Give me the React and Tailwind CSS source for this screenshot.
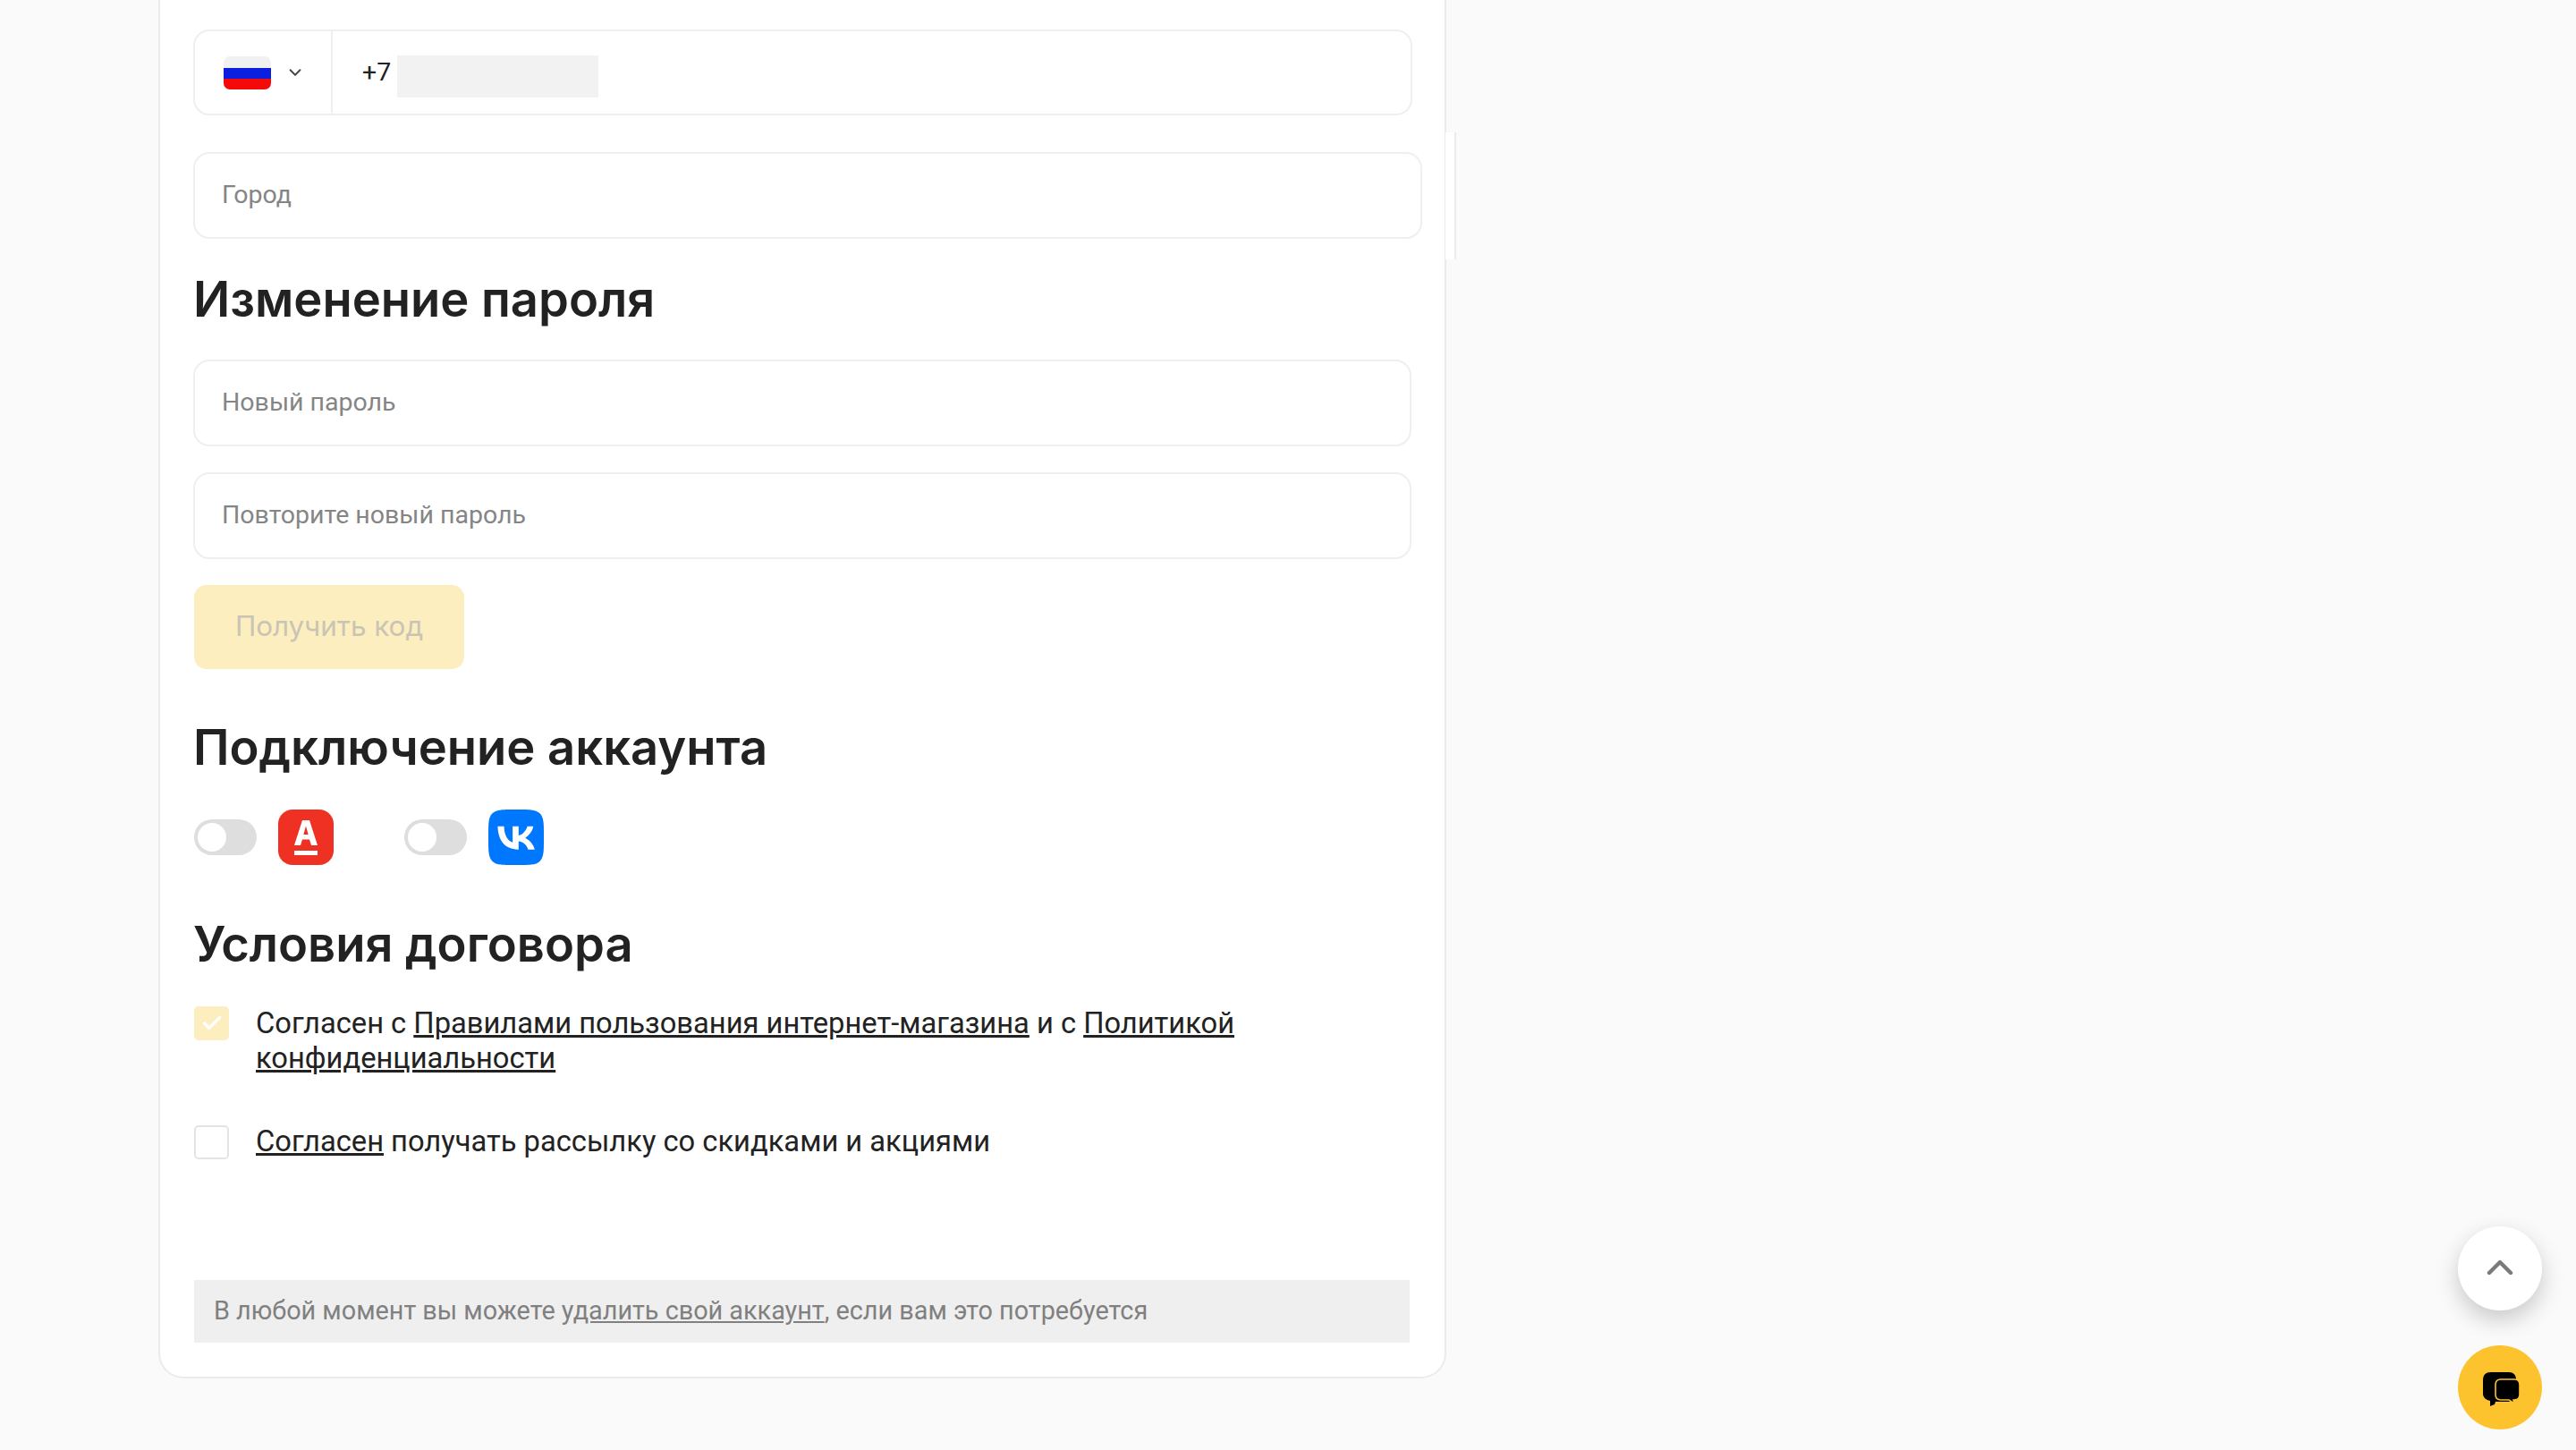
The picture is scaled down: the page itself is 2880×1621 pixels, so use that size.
import React from 'react';
import { ChevronDown, ChevronUp, Check } from 'lucide-react';
import { SiVk } from 'react-icons/si';

function Field({ label }) {
  return (
    <div className="flex items-center h-[97px] w-[1362px] px-[30px] rounded-[18px] border-2 border-[#efefef] bg-white font-[Roboto,sans-serif] text-[28.5px] text-[#858585]">
      {label}
    </div>
  );
}

function Heading({ children, className }) {
  return (
    <h2 className={`h-[64px] leading-[64px] font-[Inter,sans-serif] font-semibold text-[54.3px] text-[#222222] ${className}`}>
      {children}
    </h2>
  );
}

function Toggle() {
  return (
    <div className="flex items-center w-[70px] h-[40px] rounded-full bg-[#dedede] p-[4px]">
      <div className="w-[32px] h-[32px] rounded-full bg-white" />
    </div>
  );
}

function AlfaLogo() {
  return (
    <svg width="62" height="62" viewBox="0 0 62 62">
      <rect width="62" height="62" rx="16" fill="#ef3124" />
      <path fillRule="evenodd" fill="#fff" d="M27 12h8l9 28h-7l-2-6.5H27L25 40h-7zM31 18.5l-2.7 9.5h5.4z" />
      <rect x="18" y="46" width="26" height="5" fill="#fff" />
    </svg>
  );
}

function FlagRu() {
  return (
    <svg width="53" height="37" viewBox="0 0 53 37">
      <defs>
        <clipPath id="flag-round">
          <rect width="53" height="37" rx="7" />
        </clipPath>
      </defs>
      <g clipPath="url(#flag-round)">
        <rect width="53" height="13" fill="#f1f1f1" />
        <rect y="13" width="53" height="12" fill="#0a1fe0" />
        <rect y="25" width="53" height="12" fill="#f50a0a" />
      </g>
    </svg>
  );
}

function ChatIcon() {
  return (
    <svg width="94" height="94" viewBox="0 0 94 94" className="absolute inset-0">
      <path fill="#000" d="M37 30h20c5 0 8 3 8 8v17c0 5-3 8-8 8H42l-1 3-5 2 0-6c-5-1-8-4-8-8V39c0-6 3-9 9-9z" />
      <path fill="#000" stroke="#fdc32f" strokeWidth="1.6" d="M48 38h15c4 0 6 2 6 6v11c0 4-2 6-6 6h-1l1 4-6-4H48c-4 0-6-2-6-6V44c0-4 2-6 6-6z" />
    </svg>
  );
}

export default function App() {
  return (
    <div className="relative h-[1621px] w-full overflow-hidden bg-[#fafafa] text-[#222222]">
      <div className="relative ml-[177px] w-[1440px] rounded-b-[28px] border-x-2 border-b-2 border-[#ebebeb] bg-white pl-[37px] pt-[33px] pb-[38px]">
        {/* white bump of the city field wrapper */}
        <div className="absolute left-[1437px] top-[148px] h-[142px] w-[12px] border-r-2 border-[#ebebeb] bg-white" />

        <div className="flex h-[96px] w-[1363px] rounded-[18px] border-2 border-[#efefef] bg-white">
          <div className="flex w-[154px] items-center border-r-2 border-[#efefef] pl-[32px]">
            <FlagRu />
            <ChevronDown size={22} strokeWidth={2} className="ml-[16px] text-[#444444]" />
          </div>
          <div className="flex items-center pl-[33px] font-[Roboto,sans-serif] text-[28.5px] text-[#222222]">
            +7
            <div className="ml-[7px] mt-[8px] h-[47px] w-[225px] bg-[#f2f2f2]" />
          </div>
        </div>

        <div className="relative mt-[41px] flex h-[97px] w-[1374px] items-center rounded-[18px] border-2 border-[#efefef] bg-white px-[30px] font-[Roboto,sans-serif] text-[28.5px] text-[#858585]">
          Город
        </div>

        <Heading className="mt-[35px]">Изменение пароля</Heading>

        <div className="mt-[36px] flex flex-col gap-[29px]">
          <Field label="Новый пароль" />
          <Field label="Повторите новый пароль" />
        </div>

        <button className="ml-px mt-[29px] flex h-[94px] w-[302px] items-center justify-center rounded-[14px] bg-[#fdeebf] font-[Inter,sans-serif] text-[31.4px] text-[#c9c4b4]">
          Получить код
        </button>

        <Heading className="mt-[55px]">Подключение аккаунта</Heading>

        <div className="ml-px mt-[38px] flex items-center">
          <Toggle />
          <div className="ml-[24px]"><AlfaLogo /></div>
          <div className="ml-[79px]"><Toggle /></div>
          <div className="ml-[24px] h-[62px] w-[62px]">
            <SiVk size={62} color="#0077ff" />
          </div>
        </div>

        <Heading className="mt-[56px]">Условия договора</Heading>

        <div className="ml-px mt-[38px] flex gap-[30px]">
          <div className="flex h-[38px] w-[39px] shrink-0 items-center justify-center rounded-[5px] bg-[#fdeebf]">
            <Check size={26} strokeWidth={3} className="text-white" />
          </div>
          <p className="w-[1200px] font-[Roboto,sans-serif] text-[32.7px] leading-[39px]">
            Согласен с <a className="underline">Правилами пользования интернет-магазина</a> и с <a className="underline">Политикой</a> <a className="underline">конфиденциальности</a>
          </p>
        </div>

        <div className="ml-px mt-[55px] flex items-center gap-[30px]">
          <div className="h-[38px] w-[39px] shrink-0 rounded-[5px] border-2 border-[#e4e4e4] bg-white" />
          <p className="-mt-[2px] font-[Roboto,sans-serif] text-[32.7px] leading-[39px]">
            <a className="underline">Согласен</a> получать рассылку со скидками и акциями
          </p>
        </div>

        <div className="ml-px mt-[135px] flex h-[70px] w-[1359px] items-center bg-[#efefef] pl-[22px] font-[Roboto,sans-serif] text-[28.8px] text-[#808080]">
          <span>
            В любой момент вы можете <a className="underline">удалить свой аккаунт</a>, если вам это потребуется
          </span>
        </div>
      </div>

      <button className="absolute left-[2748px] top-[1371px] flex h-[94px] w-[94px] items-center justify-center rounded-full bg-white shadow-[0_10px_26px_rgba(0,0,0,0.2)]">
        <ChevronUp size={48} strokeWidth={2.2} className="-mt-[2px] text-[#7a7a7a]" />
      </button>
      <button className="absolute left-[2748px] top-[1504px] h-[94px] w-[94px] rounded-full bg-[#fdc32f]">
        <ChatIcon />
      </button>
    </div>
  );
}
